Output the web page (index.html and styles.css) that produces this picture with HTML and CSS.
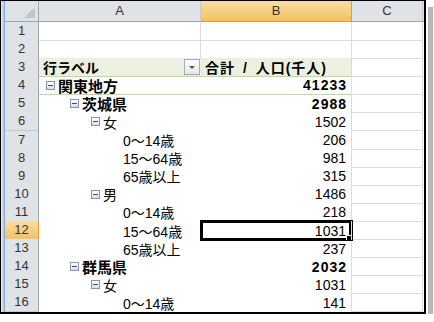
FILE: index.html
```html
<!DOCTYPE html>
<html lang="ja">
<head>
<meta charset="utf-8">
<title>ピボットテーブル</title>
<link rel="stylesheet" href="styles.css">
</head>
<body>
<div class="frame">
  <div class="edge"></div>
  <div class="sheet">
    <div class="row head">
      <div class="corner"></div>
      <div class="colhead">A</div>
      <div class="colhead sel">B</div>
      <div class="colhead">C</div>
      <div class="colhead last"></div>
    </div>
    <div class="row">
      <div class="rowhead">1</div>
      <div class="cell grid"></div><div class="cell grid"></div><div class="cell grid"></div><div class="cell"></div>
    </div>
    <div class="row">
      <div class="rowhead">2</div>
      <div class="cell grid"></div><div class="cell grid"></div><div class="cell grid"></div><div class="cell"></div>
    </div>
    <div class="row">
      <div class="rowhead">3</div>
      <div class="cell hdr label">行ラベル<span class="drop"></span></div>
      <div class="cell hdr sumhead">合計 / 人口(千人)</div>
      <div class="cell grid"></div><div class="cell"></div>
    </div>
    <div class="row">
      <div class="rowhead">4</div>
      <div class="cell item lv1 total"><span class="tog"></span>関東地方</div>
      <div class="cell val total bold">41233</div>
      <div class="cell grid"></div><div class="cell"></div>
    </div>
    <div class="row">
      <div class="rowhead">5</div>
      <div class="cell item lv2"><span class="tog"></span>茨城県</div>
      <div class="cell val bold">2988</div>
      <div class="cell grid"></div><div class="cell"></div>
    </div>
    <div class="row">
      <div class="rowhead">6</div>
      <div class="cell item lv3"><span class="tog"></span>女</div>
      <div class="cell val">1502</div>
      <div class="cell grid"></div><div class="cell"></div>
    </div>
    <div class="row">
      <div class="rowhead">7</div>
      <div class="cell item lv4">0〜14歳</div>
      <div class="cell val">206</div>
      <div class="cell grid"></div><div class="cell"></div>
    </div>
    <div class="row">
      <div class="rowhead">8</div>
      <div class="cell item lv4">15〜64歳</div>
      <div class="cell val">981</div>
      <div class="cell grid"></div><div class="cell"></div>
    </div>
    <div class="row">
      <div class="rowhead">9</div>
      <div class="cell item lv4">65歳以上</div>
      <div class="cell val">315</div>
      <div class="cell grid"></div><div class="cell"></div>
    </div>
    <div class="row">
      <div class="rowhead">10</div>
      <div class="cell item lv3"><span class="tog"></span>男</div>
      <div class="cell val">1486</div>
      <div class="cell grid"></div><div class="cell"></div>
    </div>
    <div class="row">
      <div class="rowhead">11</div>
      <div class="cell item lv4">0〜14歳</div>
      <div class="cell val">218</div>
      <div class="cell grid"></div><div class="cell"></div>
    </div>
    <div class="row">
      <div class="rowhead sel">12</div>
      <div class="cell item lv4">15〜64歳</div>
      <div class="cell val active">1031</div>
      <div class="cell grid"></div><div class="cell"></div>
    </div>
    <div class="row">
      <div class="rowhead">13</div>
      <div class="cell item lv4">65歳以上</div>
      <div class="cell val">237</div>
      <div class="cell grid"></div><div class="cell"></div>
    </div>
    <div class="row">
      <div class="rowhead">14</div>
      <div class="cell item lv2"><span class="tog"></span>群馬県</div>
      <div class="cell val bold">2032</div>
      <div class="cell grid"></div><div class="cell"></div>
    </div>
    <div class="row">
      <div class="rowhead">15</div>
      <div class="cell item lv3"><span class="tog"></span>女</div>
      <div class="cell val">1031</div>
      <div class="cell grid"></div><div class="cell"></div>
    </div>
    <div class="row">
      <div class="rowhead">16</div>
      <div class="cell item lv4">0〜14歳</div>
      <div class="cell val">141</div>
      <div class="cell grid"></div><div class="cell"></div>
    </div>
    <div class="row">
      <div class="rowhead"></div>
      <div class="cell"></div><div class="cell val"></div><div class="cell grid"></div><div class="cell"></div>
    </div>
  </div>
</div>
</body>
</html>
```

FILE: styles.css
```css
* {
    box-sizing: border-box;
}
body {
    margin: 0;
    background: #ffffff;
}
.frame {
    display: flex;
    width: 426px;
    height: 314px;
    border-style: solid;
    border-color: #000000;
    border-width: 1px 2px 2px 1px;
    overflow: hidden;
    background: #ffffff;
    box-shadow: 0 0 0 2px #ffffff, 7px 7px 1px #b8b8b8;
}
.edge {
    width: 4px;
    background: linear-gradient(to right, #e4ecf6, #b4c8e2);
    border-right: 1px solid #8fa8c8;
}
.sheet {
    flex: 1;
    font-family: "Liberation Sans", "Noto Sans CJK JP", sans-serif;
    color: #000000;
}
.row {
    display: grid;
    grid-template-columns: 34px 162px 151px 71px 1fr;
    height: 18.1px;
}
.row.head {
    height: 21px;
}

/* headers */
.corner {
    background: linear-gradient(135deg, transparent 50%, #c2c7cd 50%) right 3px bottom 3px / 11px 11px no-repeat, #dfe3e8;
    border-right: 1px solid #9ea6b0;
    border-bottom: 1px solid #9ea6b0;
}
.colhead {
    background: #dfe3e8;
    border-right: 1px solid #c5cad0;
    border-bottom: 1px solid #9ea6b0;
    text-align: center;
    font-size: 13px;
    line-height: 20px;
    color: #333333;
}
.rowhead {
    background: #dfe3e8;
    border-right: 1px solid #9ea6b0;
    border-bottom: 1px solid #c5cad0;
    text-align: center;
    font-size: 13px;
    line-height: 18px;
    color: #333333;
}
.colhead.sel,
.rowhead.sel {
    background: linear-gradient(#f9dea2, #f2c262);
    border-color: #f0953a;
}
.colhead.last {
    border-right: 0;
}

/* cells */
.cell {
    display: flex;
    align-items: center;
    white-space: nowrap;
    overflow: hidden;
    font-size: 14px;
}
.grid {
    border-right: 1px solid #dadcdd;
    border-bottom: 1px solid #dadcdd;
}
.hdr {
    background: #ebf1de;
    border-bottom: 1px solid #c4d79b;
    font-weight: bold;
}
.label {
    padding-left: 4px;
}
.sumhead {
    padding-left: 4px;
    letter-spacing: 1px;
    word-spacing: 3px;
    border-right: 1px solid #dadcdd;
}
.drop {
    margin-left: auto;
    margin-right: 1px;
    width: 16px;
    height: 16px;
    border: 1px solid #a3abb5;
    background: linear-gradient(#ffffff, #e4e8ee);
    display: flex;
    align-items: center;
    justify-content: center;
}
.drop::after {
    content: "";
    border-left: 3px solid transparent;
    border-right: 3px solid transparent;
    border-top: 3px solid #555555;
}
.total {
    border-bottom: 1px solid #c4d79b;
}
.val {
    justify-content: flex-end;
    padding-right: 5px;
    border-right: 1px solid #dadcdd;
}
.bold {
    font-weight: bold;
    letter-spacing: 1px;
    padding-right: 4px;
}
.lv1,
.lv2 {
    font-weight: bold;
    font-size: 15px;
}
.lv1 { padding-left: 7px; }
.lv2 { padding-left: 31px; }
.lv3 { padding-left: 52px; }
.lv4 { padding-left: 84px; }
.tog {
    width: 9px;
    height: 9px;
    margin-right: 3px;
    border: 1px solid #8796ae;
    background: linear-gradient(#ffffff, #d6dde8);
    display: flex;
    align-items: center;
    justify-content: center;
}
.tog::after {
    content: "";
    width: 5px;
    height: 1px;
    background: #3a5585;
}

/* active cell */
.active {
    position: relative;
    z-index: 1;
    box-shadow: 0 0 0 1px #000000, inset 0 0 0 2px #000000;
}
.active::after {
    content: "";
    position: absolute;
    right: -4px;
    bottom: -4px;
    width: 7px;
    height: 7px;
    background: #000000;
    border: 1px solid #ffffff;
}
```
